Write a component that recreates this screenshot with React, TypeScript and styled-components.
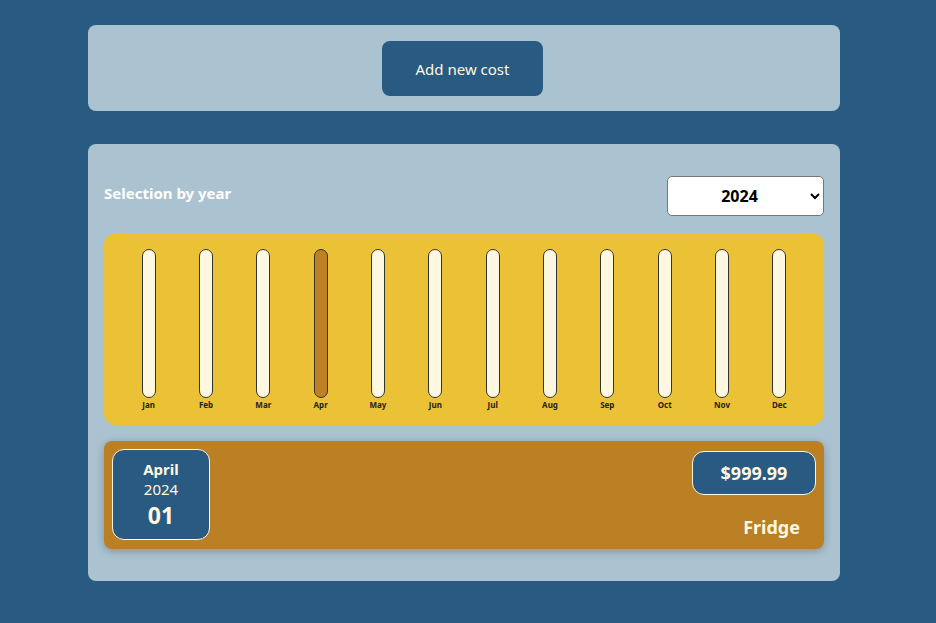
import React from "react";
import styled, { createGlobalStyle } from "styled-components";

const Global = createGlobalStyle`
  html, body { margin: 0; padding: 0; background: #295a82; }
  body { font-family: "Noto Sans", "Open Sans", sans-serif; }
  * { box-sizing: border-box; }
`;

const Page = styled.div`
  width: 936px;
  min-height: 623px;
  padding: 25px 96px 40px 88px;
  display: flex;
  flex-direction: column;
  gap: 33px;
`;

const Card = styled.section`
  background: #abc3d0;
  border-radius: 8px;
  width: 752px;
`;

const TopCard = styled(Card)`
  height: 86px;
  display: flex;
  justify-content: center;
  align-items: flex-start;
  padding-top: 16px;
  padding-right: 3px;
`;

const PrimaryButton = styled.button`
  width: 161px;
  height: 55px;
  background: #295a82;
  color: #fff8e0;
  border: none;
  border-radius: 8px;
  font-family: "Noto Sans", sans-serif;
  font-size: 15px;
  cursor: pointer;
`;

const MainCard = styled(Card)`
  padding: 32px 16px 32px 16px;
  display: flex;
  flex-direction: column;
  gap: 16px;
`;

const HeaderRow = styled.div`
  display: flex;
  justify-content: space-between;
  align-items: flex-start;
  margin-bottom: 1px;
`;

const Label = styled.h2`
  margin: 6px 0 0 0;
  font-size: 15px;
  font-weight: 700;
  color: #ffffff;
  line-height: 22px;
`;

const YearSelect = styled.select`
  width: 157px;
  height: 40px;
  border-radius: 5px;
  border: 1px solid #767676;
  background: #ffffff;
  font-family: "Noto Sans", sans-serif;
  font-size: 16px;
  font-weight: 700;
  text-align: center;
  text-align-last: center;
  color: #000;
  padding: 0 8px;
`;

const Chart = styled.div`
  background: #ebc136;
  border-radius: 12px;
  height: 192px;
  padding: 16px 16px 0 16px;
  display: grid;
  grid-template-columns: repeat(12, 1fr);
`;

const Column = styled.div`
  display: flex;
  flex-direction: column;
  align-items: center;
`;

const Bar = styled.div<{ $active: boolean }>`
  width: 14px;
  height: 149px;
  border: 1px solid #333;
  border-radius: 7px;
  background: ${(p) => (p.$active ? "#bf8124" : "#fff8e0")};
`;

const MonthLabel = styled.span`
  margin-top: 1px;
  font-size: 8px;
  font-weight: 700;
  color: #222;
  line-height: 12px;
`;

const Item = styled.div`
  background: #bb7f24;
  border-radius: 8px;
  height: 108px;
  padding: 8px 8px 8px 8px;
  display: flex;
  justify-content: space-between;
  box-shadow: 0 2px 8px rgba(0, 0, 0, 0.25);
`;

const DateBox = styled.div`
  width: 98px;
  height: 91px;
  background: #295a82;
  border: 1px solid #fff8e0;
  border-radius: 12px;
  display: flex;
  flex-direction: column;
  align-items: center;
  justify-content: center;
  color: #fff8e0;
`;

const DateMonth = styled.div`
  font-size: 15px;
  font-weight: 700;
  line-height: 20px;
`;

const DateYear = styled.div`
  font-size: 15px;
  line-height: 21px;
`;

const DateDay = styled.div`
  font-size: 23px;
  font-weight: 700;
  line-height: 30px;
`;

const RightSide = styled.div`
  display: flex;
  flex-direction: column;
  align-items: flex-end;
  justify-content: space-between;
  padding: 2px 0 1px 0;
`;

const Price = styled.div`
  width: 124px;
  height: 44px;
  background: #295a82;
  border: 1px solid #fff8e0;
  border-radius: 12px;
  display: flex;
  align-items: center;
  justify-content: center;
  color: #fff8e0;
  font-size: 18px;
  font-weight: 700;
`;

const Title = styled.div`
  color: #fff8e0;
  font-size: 18px;
  font-weight: 700;
  margin-right: 16px;
  line-height: 26px;
`;

const months = ["Jan", "Feb", "Mar", "Apr", "May", "Jun", "Jul", "Aug", "Sep", "Oct", "Nov", "Dec"];

export default function App() {
  return (
    <>
      <Global />
      <Page>
        <TopCard>
          <PrimaryButton>Add new cost</PrimaryButton>
        </TopCard>
        <MainCard>
          <HeaderRow>
            <Label>Selection by year</Label>
            <YearSelect defaultValue="2024">
              <option value="2022">2022</option>
              <option value="2023">2023</option>
              <option value="2024">2024</option>
            </YearSelect>
          </HeaderRow>
          <Chart>
            {months.map((m) => (
              <Column key={m}>
                <Bar $active={m === "Apr"} />
                <MonthLabel>{m}</MonthLabel>
              </Column>
            ))}
          </Chart>
          <Item>
            <DateBox>
              <DateMonth>April</DateMonth>
              <DateYear>2024</DateYear>
              <DateDay>01</DateDay>
            </DateBox>
            <RightSide>
              <Price>$999.99</Price>
              <Title>Fridge</Title>
            </RightSide>
          </Item>
        </MainCard>
      </Page>
    </>
  );
}
